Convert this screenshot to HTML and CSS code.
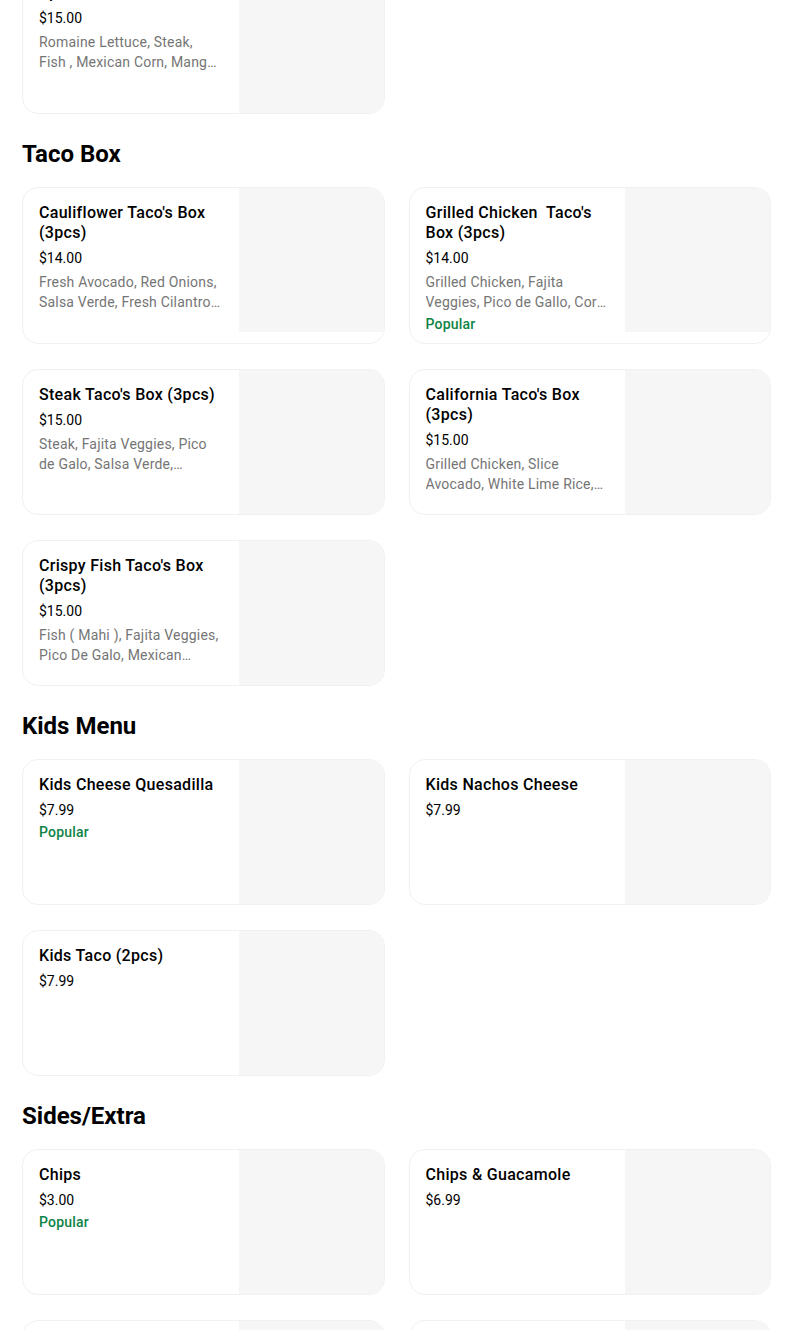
FILE: index.html
```html
<!DOCTYPE html>
<html lang="en">
<head>
<meta charset="utf-8">
<title>Menu</title>
<link rel="stylesheet" href="styles.css">
</head>
<body>
<main class="menu">
  <section class="section section--first">
    <div class="grid">
      <div class="card card--tall">
        <div class="info">
          <div class="name">Steak &amp; Fish Salad Bowl Special</div>
          <div class="price">$15.00</div>
          <div class="desc">Romaine Lettuce, Steak, Fish , Mexican Corn, Mango Salsa, Cilantro, Lime Dressing</div>
        </div>
        <div class="pic pic--fill"></div>
      </div>
    </div>
  </section>

  <section class="section">
    <h2 class="heading">Taco Box</h2>
    <div class="grid">
      <div class="card">
        <div class="info">
          <div class="name">Cauliflower Taco's Box (3pcs)</div>
          <div class="price">$14.00</div>
          <div class="desc">Fresh Avocado, Red Onions, Salsa Verde, Fresh Cilantro, Lime, Chipotle Sauce</div>
        </div>
        <div class="pic"></div>
      </div>
      <div class="card">
        <div class="info">
          <div class="name">Grilled Chicken&nbsp; Taco's Box (3pcs)</div>
          <div class="price">$14.00</div>
          <div class="desc">Grilled Chicken, Fajita Veggies, Pico de Gallo, Corn, Salsa Verde</div>
          <div class="tag">Popular</div>
        </div>
        <div class="pic"></div>
      </div>
      <div class="card">
        <div class="info">
          <div class="name">Steak Taco's Box (3pcs)</div>
          <div class="price">$15.00</div>
          <div class="desc">Steak, Fajita Veggies, Pico de Galo, Salsa Verde, Guacamole, Cilantro</div>
        </div>
        <div class="pic"></div>
      </div>
      <div class="card">
        <div class="info">
          <div class="name">California Taco's Box (3pcs)</div>
          <div class="price">$15.00</div>
          <div class="desc">Grilled Chicken, Slice Avocado, White Lime Rice, Pico de Gallo</div>
        </div>
        <div class="pic"></div>
      </div>
      <div class="card">
        <div class="info">
          <div class="name">Crispy Fish Taco's Box (3pcs)</div>
          <div class="price">$15.00</div>
          <div class="desc">Fish ( Mahi ), Fajita Veggies, Pico De Galo, Mexican Guacamole, Chipotle Sauce</div>
        </div>
        <div class="pic"></div>
      </div>
    </div>
  </section>

  <section class="section">
    <h2 class="heading">Kids Menu</h2>
    <div class="grid">
      <div class="card">
        <div class="info">
          <div class="name">Kids Cheese Quesadilla</div>
          <div class="price">$7.99</div>
          <div class="tag">Popular</div>
        </div>
        <div class="pic"></div>
      </div>
      <div class="card">
        <div class="info">
          <div class="name">Kids Nachos Cheese</div>
          <div class="price">$7.99</div>
        </div>
        <div class="pic"></div>
      </div>
      <div class="card">
        <div class="info">
          <div class="name">Kids Taco (2pcs)</div>
          <div class="price">$7.99</div>
        </div>
        <div class="pic"></div>
      </div>
    </div>
  </section>

  <section class="section">
    <h2 class="heading">Sides/Extra</h2>
    <div class="grid">
      <div class="card">
        <div class="info">
          <div class="name">Chips</div>
          <div class="price">$3.00</div>
          <div class="tag">Popular</div>
        </div>
        <div class="pic"></div>
      </div>
      <div class="card">
        <div class="info">
          <div class="name">Chips &amp; Guacamole</div>
          <div class="price">$6.99</div>
        </div>
        <div class="pic"></div>
      </div>
      <div class="card">
        <div class="info">
          <div class="name">Salsa Verde</div>
          <div class="price">$1.00</div>
        </div>
        <div class="pic"></div>
      </div>
      <div class="card">
        <div class="info">
          <div class="name">Side of Rice</div>
          <div class="price">$3.00</div>
        </div>
        <div class="pic"></div>
      </div>
    </div>
  </section>
</main>
</body>
</html>
```

FILE: styles.css
```css
* { box-sizing: border-box; }

html, body {
  margin: 0;
  padding: 0;
  background: #ffffff;
}

body {
  font-family: Roboto, "Liberation Sans", Arial, sans-serif;
  color: #000000;
  overflow: hidden;
}

.menu {
  width: 749px;
  margin: -53px 0 0 22px;
}

.heading {
  margin: 0;
  padding: 24px 0 17px;
  font-size: 24px;
  line-height: 32px;
  font-weight: 700;
  letter-spacing: 0;
}

.grid {
  display: grid;
  grid-template-columns: 1fr 1fr;
  column-gap: 24px;
  row-gap: 25px;
}

.card {
  display: grid;
  grid-template-columns: 1fr 145px;
  min-height: 146px;
  border: 1px solid #f1f1f1;
  border-radius: 16px;
  overflow: hidden;
  background: #ffffff;
}

.card--tall {
  min-height: 167px;
}

.info {
  padding: 15px 16px 9px 16px;
  min-width: 0;
}

.name {
  font-size: 16px;
  line-height: 20px;
  font-weight: 500;
  letter-spacing: 0.3px;
  color: #000000;
}

.price {
  margin-top: 5px;
  font-size: 14px;
  line-height: 20px;
  color: #000000;
}

.desc {
  margin-top: 4px;
  font-size: 14px;
  line-height: 20px;
  letter-spacing: 0.2px;
  color: #757575;
  display: -webkit-box;
  -webkit-line-clamp: 2;
  -webkit-box-orient: vertical;
  overflow: hidden;
}

.tag {
  margin-top: 2px;
  font-size: 14px;
  line-height: 20px;
  font-weight: 500;
  letter-spacing: 0.2px;
  color: #0e8345;
}

.pic {
  align-self: start;
  height: 144px;
  background: #f6f6f6;
}

.pic--fill {
  align-self: stretch;
  height: auto;
}
```
